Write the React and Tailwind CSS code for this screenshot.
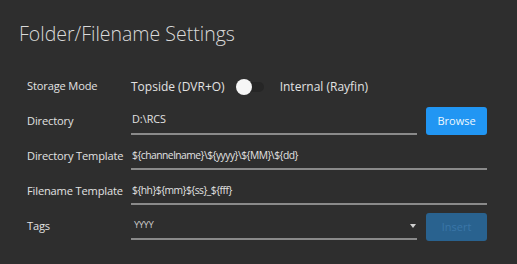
export default function App() {
  const font = { fontFamily: '"Open Sans", "Noto Sans", sans-serif' };

  return (
    <div
      className="w-[517px] h-[264px] bg-[#2e2e2e] text-[#e2e2e2] overflow-hidden"
      style={font}
    >
      {/* Title */}
      <div className="h-[69px] pl-[19px] pt-[20px]">
        <h1 className="text-[19.5px] leading-[28px] font-light text-[#dadada]">
          Folder/Filename Settings
        </h1>
      </div>

      {/* Storage Mode */}
      <div className="flex h-[35px] items-center">
        <div className="w-[131px] whitespace-nowrap pl-[27px] text-[11.1px] tracking-[-0.15px]">Storage Mode</div>
        <div className="flex items-center text-[12px]">
          <span>Topside (DVR+O)</span>
          <div className="relative ml-[11px] h-[10px] w-[28px] rounded-full bg-[#262626]">
            <div className="absolute left-0 top-[-3px] h-[16px] w-[16px] rounded-full bg-[#f6f6f6]" />
          </div>
          <span className="ml-[16px]">Internal (Rayfin)</span>
        </div>
      </div>

      {/* Directory */}
      <div className="flex h-[35px] items-start">
        <div className="flex h-[35px] w-[131px] items-center whitespace-nowrap pl-[27px] text-[11.1px] tracking-[-0.15px]">
          Directory
        </div>
        <div className="mt-[4px] flex h-[27px] w-[286px] items-center border-b-2 border-[#8a8a8a] pb-[2px] pl-[1px] text-[10.8px]">
          D:\RCS
        </div>
        <button className="ml-[9px] mt-[3px] h-[28px] w-[61px] rounded-[3px] bg-[#2196f3] text-[11px] text-[#eef6fd]">
          Browse
        </button>
      </div>

      {/* Directory Template */}
      <div className="flex h-[35px] items-start">
        <div className="flex h-[35px] w-[131px] items-center whitespace-nowrap pl-[27px] text-[11.1px] tracking-[-0.15px]">
          Directory Template
        </div>
        <div className="mt-[4px] flex h-[27px] w-[356px] items-center border-b-2 border-[#8a8a8a] pl-[1px] text-[10.3px] tracking-[-0.5px]">
          {"${channelname}\\${yyyy}\\${MM}\\${dd}"}
        </div>
      </div>

      {/* Filename Template */}
      <div className="flex h-[35px] items-start">
        <div className="flex h-[35px] w-[131px] items-center whitespace-nowrap pl-[27px] text-[11.1px] tracking-[-0.15px]">
          Filename Template
        </div>
        <div className="mt-[4px] flex h-[27px] w-[356px] items-center border-b-2 border-[#8a8a8a] pl-[1px] text-[10.3px] tracking-[-0.5px]">
          {"${hh}${mm}${ss}_${fff}"}
        </div>
      </div>

      {/* Tags */}
      <div className="flex h-[35px] items-start">
        <div className="flex h-[35px] w-[131px] items-center whitespace-nowrap pl-[27px] text-[11.1px] tracking-[-0.15px]">
          Tags
        </div>
        <div className="mt-[4px] flex h-[27px] w-[286px] items-center justify-between border-b-2 border-[#8a8a8a] pl-[3px] pr-[1px] text-[9.5px] tracking-[-0.5px] text-[#c6c6c6]">
          <span>YYYY</span>
          <svg width="6" height="4" viewBox="0 0 6 4">
            <path d="M0 0 L6 0 L3 4 Z" fill="#d0d0d0" />
          </svg>
        </div>
        <button
          disabled
          className="ml-[9px] mt-[4px] h-[28px] w-[61px] rounded-[3px] bg-[#29628f] text-[11px] text-[#3a76a8]"
        >
          Insert
        </button>
      </div>
    </div>
  );
}
